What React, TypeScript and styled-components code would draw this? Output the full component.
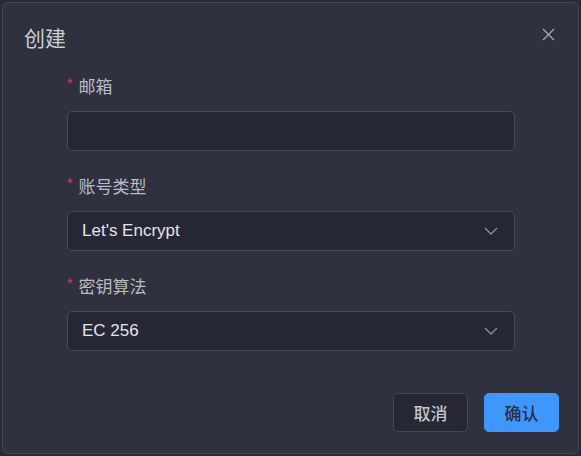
import React from "react";
import styled, { createGlobalStyle } from "styled-components";

const Global = createGlobalStyle`
  html, body { margin: 0; padding: 0; background: #282a35; }
  body {
    font-family: "Liberation Sans", "Noto Sans CJK SC", sans-serif;
    width: 581px; height: 456px; overflow: hidden;
  }
  #root { padding: 2px; box-sizing: border-box; height: 456px; }
`;

const Dialog = styled.div`
  position: relative;
  box-sizing: border-box;
  height: 452px;
  background: #2f313e;
  border: 1px solid #454755;
  border-radius: 6px;
  display: flex;
  flex-direction: column;
`;

const Header = styled.div`
  padding: 20px 20px 0 21px;
`;

const Title = styled.h2`
  margin: 0;
  font-size: 21px;
  line-height: 28px;
  font-weight: 400;
  color: #caccd5;
  font-family: "Noto Sans CJK SC", sans-serif;
`;

const CloseButton = styled.button`
  position: absolute;
  top: 21px;
  right: 20px;
  width: 20px;
  height: 20px;
  padding: 0;
  border: none;
  background: transparent;
  display: flex;
  align-items: center;
  justify-content: center;
  cursor: pointer;
`;

const Form = styled.div`
  margin-top: 23px;
  padding-left: 64px;
  width: 448px;
  display: flex;
  flex-direction: column;
  gap: 23px;
`;

const Item = styled.div`
  display: flex;
  flex-direction: column;
  gap: 15px;
`;

const Label = styled.label`
  display: flex;
  align-items: center;
  height: 22px;
  font-family: "Noto Sans CJK SC", sans-serif;
  font-size: 17px;
  color: #b9bbc6;
`;

const Star = styled.span`
  color: #e0395c;
  font-size: 14px;
  margin-right: 6px;
  font-family: "Liberation Sans", sans-serif;
  position: relative;
  top: -2px;
`;

const Field = styled.div`
  box-sizing: border-box;
  height: 40px;
  background: #252733;
  border: 1px solid #474956;
  border-radius: 5px;
  display: flex;
  align-items: center;
  padding: 0 16px 0 14px;
  font-size: 17px;
  color: #e2e4ec;
`;

const Value = styled.span`
  flex: 1;
`;

const Footer = styled.div`
  margin-top: auto;
  padding: 0 19px 21px 0;
  display: flex;
  justify-content: flex-end;
  gap: 16px;
`;

const Button = styled.button<{ $primary?: boolean }>`
  box-sizing: border-box;
  width: 75px;
  height: 39px;
  border-radius: 5px;
  font-family: "Noto Sans CJK SC", sans-serif;
  font-size: 17px;
  font-weight: 500;
  cursor: pointer;
  border: 1px solid ${(p) => (p.$primary ? "#4096ff" : "#454755")};
  background: ${(p) => (p.$primary ? "#4096ff" : "#252733")};
  color: ${(p) => (p.$primary ? "#2b2e3d" : "#c3c5cf")};
`;

const Chevron = () => (
  <svg width="14" height="8" viewBox="0 0 14 8">
    <path d="M1 1 L7 7 L13 1" fill="none" stroke="#8d8f9c" strokeWidth="1.3" />
  </svg>
);

export default function App() {
  return (
    <>
      <Global />
      <Dialog>
        <Header>
          <Title>创建</Title>
        </Header>
        <CloseButton aria-label="close">
          <svg width="13" height="13" viewBox="0 0 13 13">
            <path d="M1 1 L12 12 M12 1 L1 12" stroke="#a3a5b2" strokeWidth="1.4" />
          </svg>
        </CloseButton>
        <Form>
          <Item>
            <Label><Star>*</Star>邮箱</Label>
            <Field />
          </Item>
          <Item>
            <Label><Star>*</Star>账号类型</Label>
            <Field>
              <Value>Let's Encrypt</Value>
              <Chevron />
            </Field>
          </Item>
          <Item>
            <Label><Star>*</Star>密钥算法</Label>
            <Field>
              <Value>EC 256</Value>
              <Chevron />
            </Field>
          </Item>
        </Form>
        <Footer>
          <Button>取消</Button>
          <Button $primary>确认</Button>
        </Footer>
      </Dialog>
    </>
  );
}
